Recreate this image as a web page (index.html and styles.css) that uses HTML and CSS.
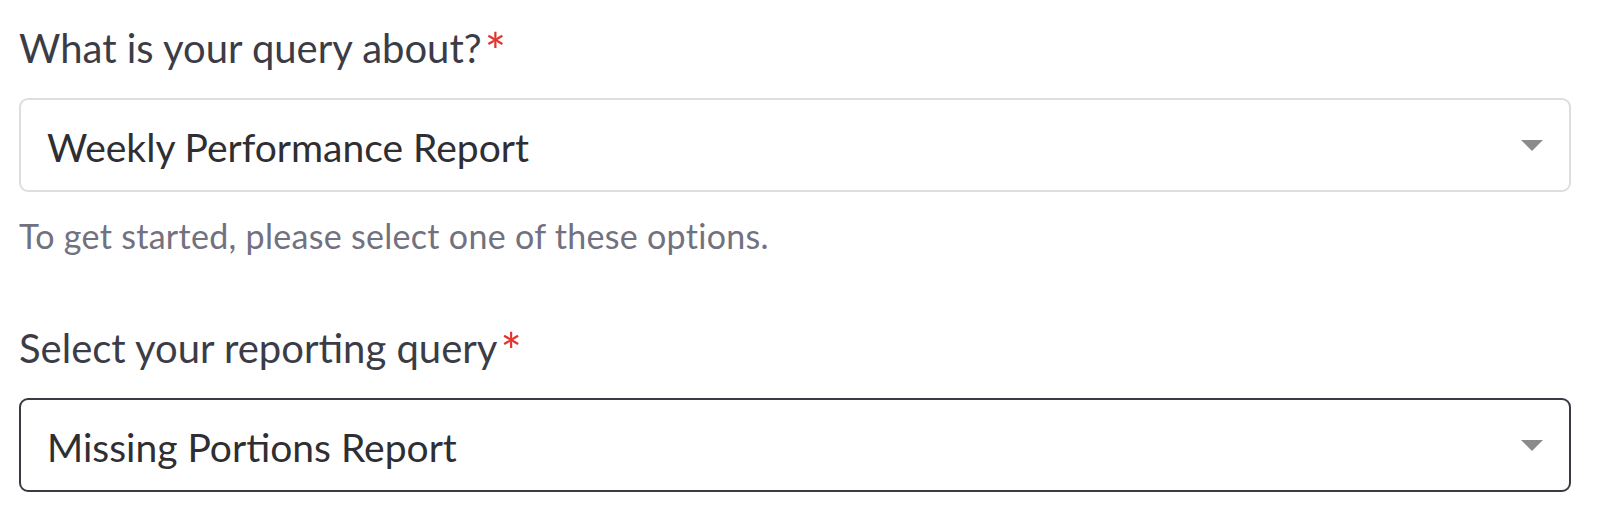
FILE: index.html
```html
<!DOCTYPE html>
<html lang="en">
<head>
<meta charset="utf-8">
<title>Query form</title>
<link rel="stylesheet" href="styles.css">
</head>
<body>
<form class="form">
  <div class="field">
    <label class="label">What is your query about?<span class="req">*</span></label>
    <div class="select">
      <span class="value">Weekly Performance Report</span>
      <span class="caret"></span>
    </div>
    <p class="help">To get started, please select one of these options.</p>
  </div>
  <div class="field field-second">
    <label class="label">Select your reporting query<span class="req">*</span></label>
    <div class="select select-active">
      <span class="value">Missing Portions Report</span>
      <span class="caret"></span>
    </div>
  </div>
</form>
</body>
</html>
```

FILE: styles.css
```css
html, body {
  margin: 0;
  padding: 0;
  background: #ffffff;
}

body {
  font-family: "Lato", "Noto Sans", "Liberation Sans", sans-serif;
  color: #3c3c46;
}

.form {
  display: flex;
  flex-direction: column;
  width: 1552px;
  padding: 22px 0 0 19px;
}

.field {
  display: flex;
  flex-direction: column;
}

.field-second {
  margin-top: 66px;
}

.label {
  font-size: 40px;
  line-height: 52px;
  color: #3c3c46;
  display: flex;
  align-items: flex-start;
}

.req {
  color: #e2342d;
  font-size: 50px;
  line-height: 50px;
  margin-left: 3px;
  margin-top: 4px;
}

.select {
  margin-top: 22px;
  box-sizing: border-box;
  height: 94px;
  border: 2px solid #dedee0;
  border-radius: 9px;
  display: flex;
  align-items: center;
  justify-content: space-between;
  padding: 4px 26px 0 26px;
  background: #fff;
}

.select-active {
  border-color: #3a3a44;
}

.value {
  font-size: 39px;
  line-height: 46px;
  color: #2e2e33;
}

.caret {
  width: 0;
  height: 0;
  border-left: 11px solid transparent;
  border-right: 11px solid transparent;
  border-top: 11px solid #8b8b8b;
  margin-top: -4px;
}

.help {
  margin: 24px 0 0 0;
  font-size: 34px;
  line-height: 40px;
  letter-spacing: 0.3px;
  color: #72717f;
}
```
